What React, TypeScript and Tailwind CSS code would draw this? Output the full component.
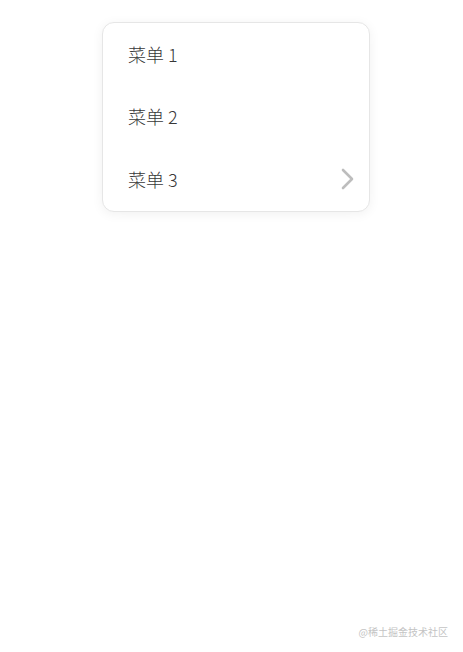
const items = [
  { label: '菜单 1', hasChildren: false },
  { label: '菜单 2', hasChildren: false },
  { label: '菜单 3', hasChildren: true },
]

function Chevron() {
  return (
    <svg width="14" height="22" viewBox="0 0 14 22" fill="none" className="text-[#bdbdbd]">
      <polyline points="3,2 12,11 3,20" stroke="currentColor" strokeWidth="2.6" strokeLinecap="round" strokeLinejoin="round" />
    </svg>
  )
}

export default function App() {
  return (
    <main
      className="relative h-[652px] w-[463px] overflow-hidden bg-white pt-[22px] pl-[102px]"
      style={{ fontFamily: '"Noto Sans CJK SC", "Noto Sans", sans-serif' }}
    >
      <ul className="w-[268px] rounded-[12px] border border-[#e6e6e6] bg-white shadow-[0_2px_12px_rgba(0,0,0,0.06)]">
        {items.map((item) => (
          <li
            key={item.label}
            className="flex h-[62.5px] items-center justify-between pl-[25px] pr-[15px] text-[18px] font-light text-[#383838]"
          >
            <span>{item.label}</span>
            {item.hasChildren && <Chevron />}
          </li>
        ))}
      </ul>
      <p className="absolute right-[15px] bottom-[13px] text-[10px] text-[#c4c4c4]">@稀土掘金技术社区</p>
    </main>
  )
}
